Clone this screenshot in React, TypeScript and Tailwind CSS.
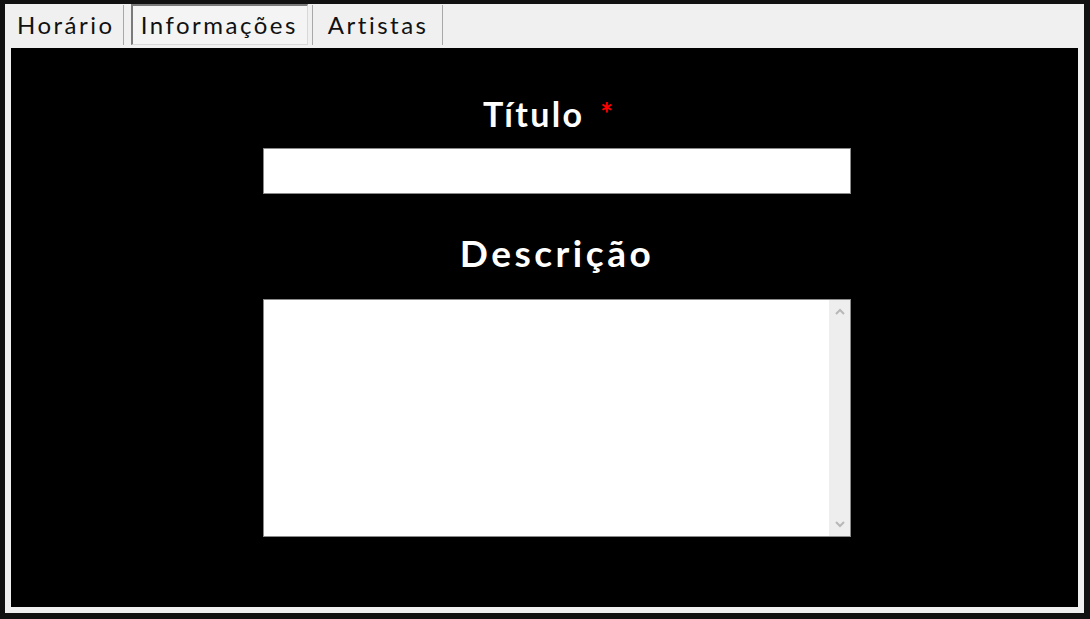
import React from 'react';

const FONT = { fontFamily: 'Lato, "Noto Sans", sans-serif' };

const tabs = [
  { label: 'Horário', cls: 'pl-[9px] pr-[8px] mb-[3px]' },
  { label: 'Informações', cls: 'ml-[7px] mr-[4px] mb-[3px] pl-[8px] pr-[9px] border-t-2 border-l-2 border-[#7a7a7a] border-r border-r-[#d8d8d8] border-b border-b-[#d8d8d8] bg-[#f4f4f4]' },
  { label: 'Artistas', cls: 'pl-[15px] pr-[14px] mb-[3px]' },
];

export default function App() {
  return (
    <div className="w-[1090px] h-[619px] bg-[#111111] pt-[4px] pl-[5px] pr-[6px] pb-[6px]" style={FONT}>
      <div className="w-full h-full bg-[#f0f0f0] flex flex-col">
        <div className="flex h-[44px] items-stretch pl-[3px]">
          {tabs.map((t) => (
            <div key={t.label} className="flex items-stretch">
              <div className={'flex items-center ' + t.cls}>
                <span className="text-[24px] text-[#111] tracking-[2.5px] leading-none">{t.label}</span>
              </div>
              <div className="w-px bg-[#a8a8a8] mb-[3px] mt-[1px]" />
            </div>
          ))}
        </div>
        <div className="flex-1 ml-[6px] mr-[6px] mb-[6px] bg-black flex flex-col pl-[252px]">
          <div className="w-[588px] flex flex-col items-center">
            <div className="mt-[46px] h-[40px] flex items-center pr-[18px]">
              <span className="text-white font-bold text-[34px] tracking-[2.3px] leading-none">Título</span>
              <span className="text-[#ff0000] font-bold text-[30px] ml-[16px] leading-none mt-[-2px]">*</span>
            </div>
            <input
              type="text"
              className="mt-[14px] w-[588px] h-[46px] bg-white border border-[#8a8a8a] outline-none"
            />
            <div className="mt-[38px] h-[40px] flex items-center">
              <span className="text-white font-bold text-[37px] tracking-[3.5px] leading-none">Descrição</span>
            </div>
            <div className="mt-[27px] w-[588px] h-[238px] bg-white border border-[#8a8a8a] flex">
              <div className="flex-1" />
              <div className="w-[21px] bg-[#eeeeee] flex flex-col items-center justify-between py-[8px]">
                <svg width="10" height="8" viewBox="0 0 10 8">
                  <path d="M1 6 L5 2 L9 6" fill="none" stroke="#b8b8b8" strokeWidth="2" />
                </svg>
                <svg width="10" height="8" viewBox="0 0 10 8">
                  <path d="M1 2 L5 6 L9 2" fill="none" stroke="#b8b8b8" strokeWidth="2" />
                </svg>
              </div>
            </div>
          </div>
        </div>
      </div>
    </div>
  );
}
